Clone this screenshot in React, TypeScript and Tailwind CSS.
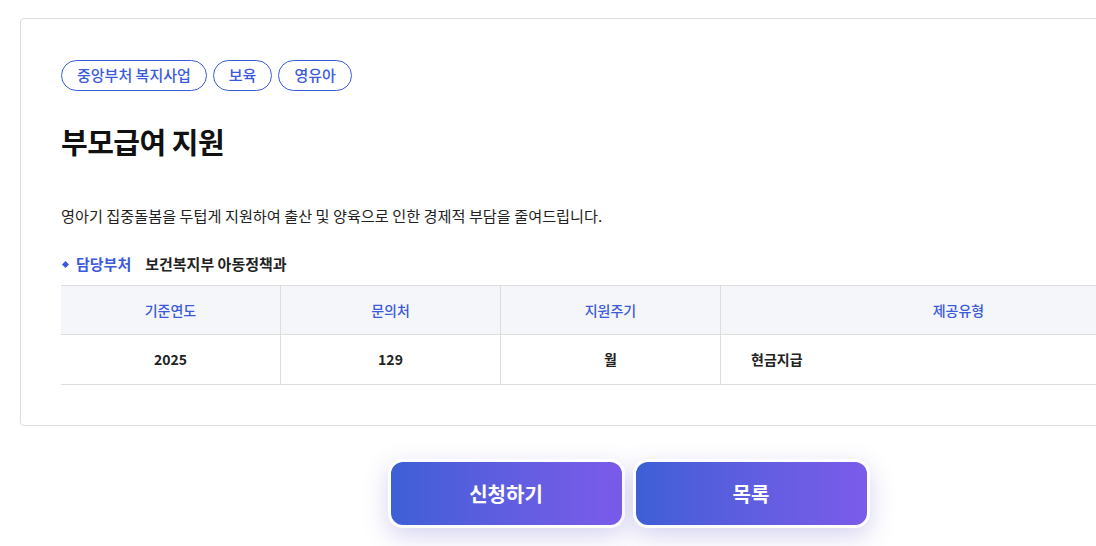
const tags = ["중앙부처 복지사업", "보육", "영유아"];

const columns = [
  { head: "기준연도", value: "2025" },
  { head: "문의처", value: "129" },
  { head: "지원주기", value: "월" },
];

export default function App() {
  return (
    <div
      className="min-h-[546px] bg-white pl-[20px] pt-[18px]"
      style={{ fontFamily: '"Noto Sans CJK KR", "Noto Sans", sans-serif' }}
    >
      <div className="w-[1217px]">
        <div className="rounded-[4px] border border-[#dddddd] bg-white px-[40px] pb-[40px] pt-[41px]">
          <div className="flex gap-[6px]">
            {tags.map((tag) => (
              <span
                key={tag}
                className="flex h-[31px] items-center rounded-full border border-[#3b5bdb] px-[15px] text-[15px] font-medium text-[#3b5bdb]"
              >
                {tag}
              </span>
            ))}
          </div>
          <h1 className="mt-[30px] text-[29px] font-bold leading-[40px] tracking-[-0.5px] text-[#111111]">
            부모급여 지원
          </h1>
          <p className="mt-[43px] text-[15.2px] leading-[22px] text-[#222222]">
            영아기 집중돌봄을 두텁게 지원하여 출산 및 양육으로 인한 경제적 부담을 줄여드립니다.
          </p>
          <div className="mt-[27px] flex items-center text-[15px] font-bold leading-[22px]">
            <span className="ml-[2px] mr-[8px] inline-block h-[5px] w-[5px] rotate-45 bg-[#3b5bdb]" />
            <span className="text-[#3b5bdb]">담당부처</span>
            <span className="ml-[14px] text-[#222222]">보건복지부 아동정책과</span>
          </div>
          <div className="mt-[10px] border-t border-[#dddddd]">
            <div className="flex h-[49px] border-b border-[#dddddd] bg-[#f5f6fa] text-[14px] font-medium text-[#3b5bdb]">
              {columns.map((c) => (
                <div
                  key={c.head}
                  className="flex w-[220px] items-center justify-center border-r border-[#dddddd]"
                >
                  {c.head}
                </div>
              ))}
              <div className="flex flex-1 items-center justify-center">제공유형</div>
            </div>
            <div className="flex h-[50px] border-b border-[#dddddd] text-[14px] font-bold text-[#222222]">
              {columns.map((c) => (
                <div
                  key={c.head}
                  className="flex w-[220px] items-center justify-center border-r border-[#dddddd]"
                >
                  {c.value}
                </div>
              ))}
              <div className="flex flex-1 items-center pl-[30px]">현금지급</div>
            </div>
          </div>
        </div>
        <div className="mt-[33px] flex justify-center gap-[8px]">
          <button className="h-[69px] w-[237px] rounded-[15px] border-[3px] border-white bg-gradient-to-r from-[#3d5fd6] to-[#7b5bea] text-[20px] font-bold text-white shadow-[0_8px_24px_rgba(90,80,200,0.25)]">
            신청하기
          </button>
          <button className="h-[69px] w-[237px] rounded-[15px] border-[3px] border-white bg-gradient-to-r from-[#3d5fd6] to-[#7b5bea] text-[20px] font-bold text-white shadow-[0_8px_24px_rgba(90,80,200,0.25)]">
            목록
          </button>
        </div>
      </div>
    </div>
  );
}
